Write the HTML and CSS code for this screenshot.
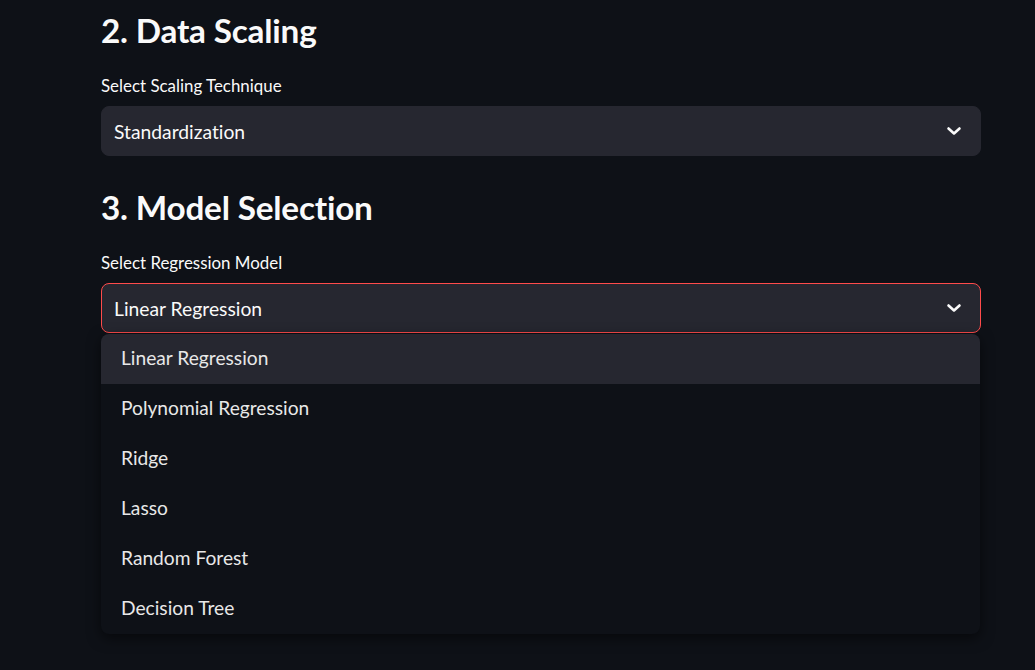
FILE: index.html
```html
<!DOCTYPE html>
<html>
<head>
<meta charset="utf-8">
<link rel="stylesheet" href="styles.css">
</head>
<body>
<main class="page">
  <h2 class="heading">2. Data Scaling</h2>
  <div class="field">
    <label class="label">Select Scaling Technique</label>
    <div class="select">
      <span class="value">Standardization</span>
      <svg class="chev" width="16" height="10" viewBox="0 0 16 10"><path d="M2.5 2.5 L8 7.5 L13.5 2.5" fill="none" stroke="#fafafa" stroke-width="2.6" stroke-linecap="round" stroke-linejoin="round"/></svg>
    </div>
  </div>
  <h2 class="heading second">3. Model Selection</h2>
  <div class="field">
    <label class="label">Select Regression Model</label>
    <div class="select-wrap">
      <div class="select focused">
        <span class="value">Linear Regression</span>
        <svg class="chev" width="16" height="10" viewBox="0 0 16 10"><path d="M2.5 2.5 L8 7.5 L13.5 2.5" fill="none" stroke="#fafafa" stroke-width="2.6" stroke-linecap="round" stroke-linejoin="round"/></svg>
      </div>
      <ul class="menu">
        <li class="item active">Linear Regression</li>
        <li class="item">Polynomial Regression</li>
        <li class="item">Ridge</li>
        <li class="item">Lasso</li>
        <li class="item">Random Forest</li>
        <li class="item">Decision Tree</li>
      </ul>
    </div>
  </div>
</main>
</body>
</html>
```
FILE: styles.css
```css
html, body {
  margin: 0;
  padding: 0;
  background: #0e1117;
  height: 100%;
  overflow: hidden;
}
body {
  font-family: Lato, "Noto Sans", sans-serif;
  color: #fafafa;
  font-variant-ligatures: none;
}
.page {
  width: 880px;
  margin-left: 101px;
  display: flex;
  flex-direction: column;
}
.heading {
  margin: 0;
  font-size: 33.3px;
  font-weight: 700;
  line-height: 60px;
  height: 60px;
  letter-spacing: -0.2px;
}
.heading.second {
  margin-top: 21px;
}
.field {
  display: flex;
  flex-direction: column;
  gap: 10px;
  margin-top: 16px;
}
.label {
  font-size: 16.9px;
  line-height: 20px;
  height: 20px;
}
.select-wrap {
  position: relative;
}
.select {
  height: 50px;
  box-sizing: border-box;
  background: #262730;
  border: 1px solid #262730;
  border-radius: 8px;
  display: flex;
  align-items: center;
  justify-content: space-between;
  padding: 0 18px 0 12px;
}
.select.focused {
  border-color: #ff4b4b;
}
.value {
  font-size: 19.3px;
}
.chev {
  display: block;
}
.menu {
  position: absolute;
  top: 51px;
  left: 0;
  width: 879px;
  margin: 0;
  padding: 0;
  list-style: none;
  background: #0e1117;
  border-radius: 8px;
  box-shadow: 0 4px 14px rgba(0, 0, 0, 0.55);
  overflow: hidden;
}
.item {
  height: 50px;
  line-height: 48px;
  padding-left: 20px;
  font-size: 19.2px;
  color: #e8e8e8;
}
.item.active {
  background: #262730;
}
```
